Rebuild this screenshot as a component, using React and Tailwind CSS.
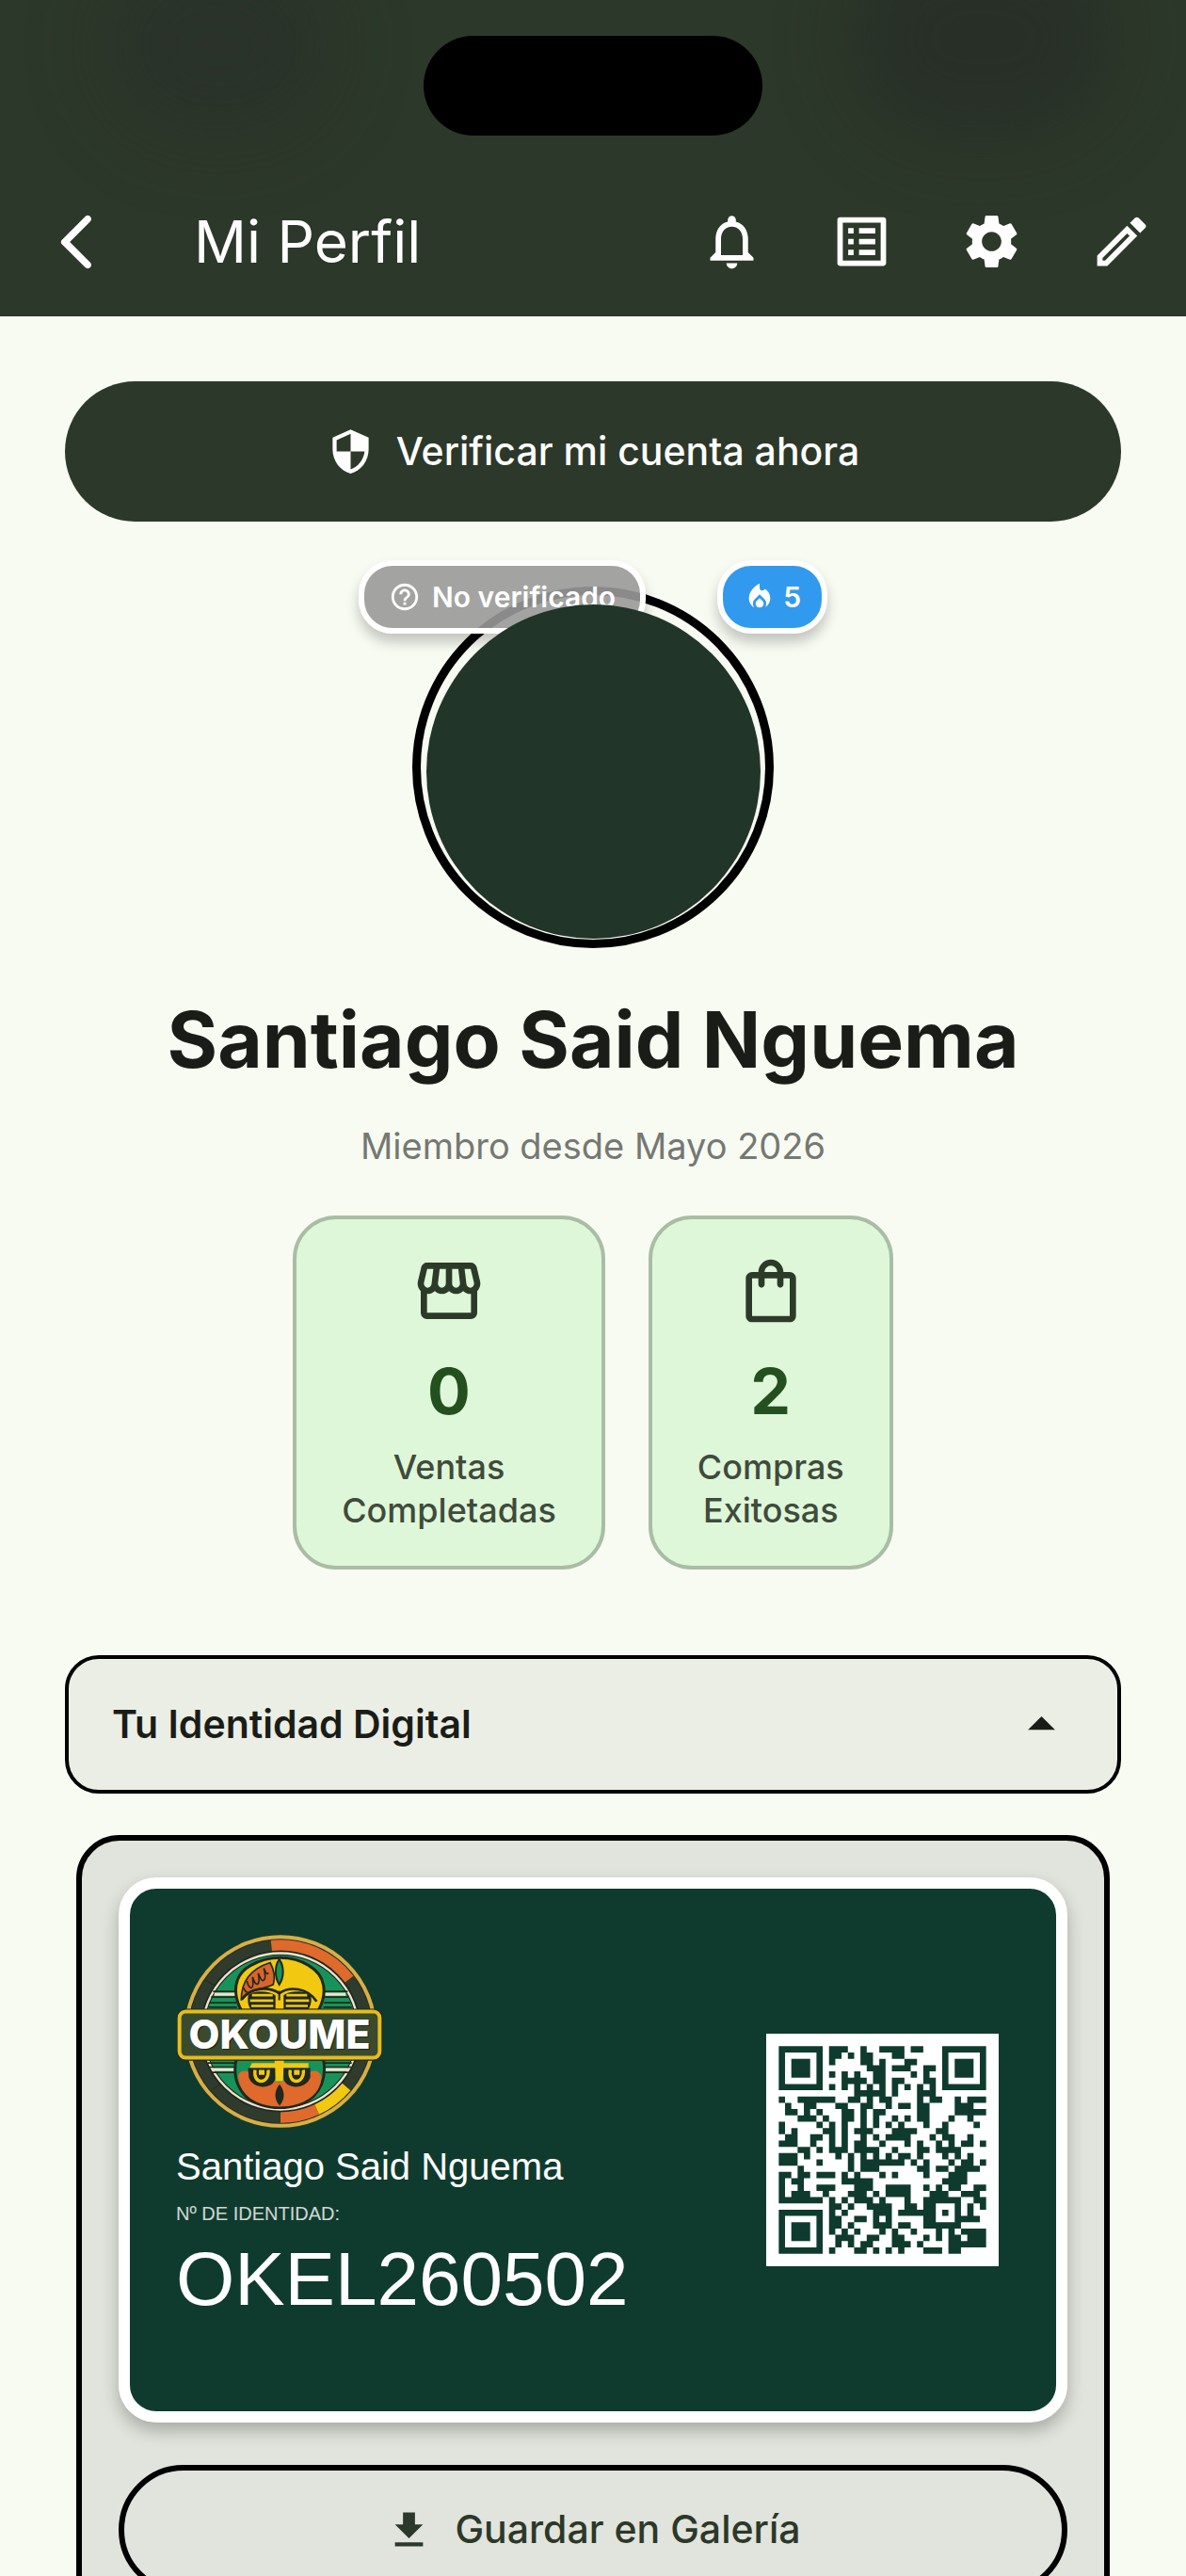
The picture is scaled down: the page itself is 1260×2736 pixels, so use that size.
import React, { useState } from 'react';
import {
  MdNotificationsNone,
  MdListAlt,
  MdSettings,
  MdOutlineEdit,
  MdSecurity,
  MdHelpOutline,
  MdOutlineStorefront,
  MdOutlineShoppingBag,
  MdArrowDropUp,
  MdArrowDropDown,
} from 'react-icons/md';

const USER = {
  name: 'Santiago Said Nguema',
  since: 'Miembro desde Mayo 2026',
  identity: 'OKEL260502',
  streak: 5,
};

const ACTIONS = [
  { label: 'Notificaciones', Icon: MdNotificationsNone },
  { label: 'Pedidos', Icon: MdListAlt },
  { label: 'Ajustes', Icon: MdSettings },
  { label: 'Editar perfil', Icon: MdOutlineEdit },
];

const STATS = [
  { value: 0, lines: ['Ventas', 'Completadas'], Icon: MdOutlineStorefront },
  { value: 2, lines: ['Compras', 'Exitosas'], Icon: MdOutlineShoppingBag },
];

// Dark modules of each QR row, without the three finder squares
const QR_ROWS = [
  '8-10 13 16-19 21-22',
  '8-9 11 13-14 18-19',
  '8 13-14 16 20-21',
  '14-16 18-20 23-24',
  '8 10 12 15-16 21 23',
  '10-13 15-16 18-19 23-24',
  '8 10 12 14 16 18 20 22 24',
  '12-16 18 22-24',
  '0 3-8 11-12 14 16-17 22 24-25 28 30-32',
  '1 4-5 9-10 13-14 17 19-20 22-23 28-30',
  '1-2 4 6 10-11 13 15-16 22-23 28-32',
  '3-5 7 10-11 13 15 18 20 22-23 27 30',
  '0 6 8 10 13 15 17 19 23 26 31',
  '0 2 7-8 10 12-14 18-21 25-26',
  '1-2 5-6 8 10 13 15 17-20 24 26-27 30',
  '0-2 5 8 10 12-13 16 20 22 25 27 29-30 32',
  '3-4 6 8-10 12-15 18 22-23 25-28',
  '0-2 4 9 11 13 15 17 19-20 22 26 28 30',
  '0-2 6 11 13-19 21 23 27 29-30 32',
  '3 11 13-15 22-23 25-26 28-31',
  '0-1 3-4 6-8 10 12 16 18 23 27-29',
  '0 2-3 10-14 26-29',
  '0 3 6-8 12-14 17-20 23 25 27-28 31-32',
  '0 2-4 7 11-13 15 17-20 24-26 29-31',
  '0-6 8 10 12-14 16 20 23-28 31-32',
  '8-9 11 14-17 20-21 23-24 28 30 32',
  '8 10 15-17 19-24 26 28 30',
  '8-9 12-13 15 17 23-24 28-31',
  '8-9 11 15-17 19-20 23-28',
  '8 10 12 16 18 21 25 27 29-32',
  '9-11 14-15 18-19 23 25 27-28 30-32',
  '9 11 13-14 18-20 22 27-32',
  '8 12-13 15 17 19 23-25 27-28',
];

const QR_PATH = QR_ROWS.map((row, y) =>
  row
    .split(' ')
    .map((run) => {
      const [from, to = from] = run.split('-').map(Number);
      return `M${from} ${y}h${to - from + 1}v1h-${to - from + 1}z`;
    })
    .join('')
).join('');

const FINDERS = [
  [0, 0],
  [26, 0],
  [0, 26],
];

const QrCode = ({ className }) => (
  <svg viewBox="0 0 37 37" className={className} role="img" aria-label="Código QR">
    <rect width="37" height="37" fill="#fff" />
    <g transform="translate(2 2)" fill="#0f3b2e">
      <path d={QR_PATH} />
      {FINDERS.map(([x, y]) => (
        <g key={`${x}-${y}`}>
          <path fillRule="evenodd" d={`M${x} ${y}h7v7h-7zM${x + 1} ${y + 1}v5h5v-5z`} />
          <rect x={x + 2} y={y + 2} width="3" height="3" />
        </g>
      ))}
    </g>
  </svg>
);

const BackIcon = ({ className }) => (
  <svg viewBox="0 0 24 24" fill="currentColor" className={className} aria-hidden="true">
    <path d="M16.62 2.99c-.49-.49-1.28-.49-1.77 0L6.54 11.3c-.39.39-.39 1.02 0 1.41l8.31 8.31c.49.49 1.28.49 1.77 0s.49-1.28 0-1.77L9.38 12l7.25-7.25c.48-.48.48-1.28-.01-1.76z" />
  </svg>
);

const FlameIcon = ({ className }) => (
  <svg viewBox="0 0 24 24" fill="currentColor" className={className} aria-hidden="true">
    <path d="m12 12.9-2.13 2.09c-.56.56-.87 1.29-.87 2.07C9 18.68 10.35 20 12 20s3-1.32 3-2.94c0-.78-.31-1.52-.87-2.07L12 12.9z" />
    <path d="m16 6-.44.55C14.38 8.02 12 7.19 12 5.3V2S4 6 4 13c0 2.92 1.56 5.47 3.89 6.86-.56-.79-.89-1.76-.89-2.8 0-1.32.52-2.56 1.47-3.5L12 10.1l3.53 3.47c.95.93 1.47 2.17 1.47 3.5 0 1.02-.31 1.96-.85 2.75 1.89-1.15 3.29-3.06 3.71-5.3.66-3.55-1.07-6.9-3.86-8.52z" />
  </svg>
);

const DownloadIcon = ({ className }) => (
  <svg viewBox="0 0 24 24" fill="currentColor" className={className} aria-hidden="true">
    <path d="M19 9h-4V3H9v6H5l7 7 7-7zM5 18v2h14v-2H5z" />
  </svg>
);

const Logo = ({ className }) => (
  <svg viewBox="54 75 660 620" className={className} role="img" aria-label="OKOUME">
    <circle cx="387" cy="385" r="301" fill="#262f24" stroke="#d9ae45" strokeWidth="12" />
    <circle cx="387" cy="385" r="275" fill="none" stroke="#2f3b2c" strokeWidth="34" />
    <g fill="none" strokeWidth="34">
      <path d="M358 111.500A275 275 0 0 1 606 219" stroke="#e0692c" />
      <path d="M387 660A275 275 0 0 0 503 634" stroke="#e0692c" />
      <path d="M503 634A275 275 0 0 0 597 562" stroke="#f2c811" />
    </g>
    <path d="M148 222l30 18M172 570l26-20" stroke="#20281f" strokeWidth="3" />
    <circle cx="387" cy="385" r="249" fill="#17935a" stroke="#1d241c" strokeWidth="14" />
    <circle cx="387" cy="385" r="249" fill="none" stroke="#ece3cd" strokeWidth="7" />

    {/* side stripes */}
    <g stroke="#1f2a1e" strokeWidth="5">
      <path d="M172 258h75M526 258h75M166 276h82M526 276h80M162 294h84M526 294h84M158 308h90M524 308h90" />
      <path d="M156 486h90M526 486h88M160 499h86M526 499h86M166 516h80M526 516h80" />
    </g>
    <path d="M176 267h68M529 267h66M170 507h72M530 507h72" stroke="#ece3cd" strokeWidth="10" />

    {/* upper half of the mask */}
    <path d="M262 318C232 262 240 204 290 176C350 142 424 142 478 176C530 206 538 262 508 318Z" fill="#f2c811" stroke="#20281f" strokeWidth="9" />
    <path d="M262 284C262 222 298 184 354 166C366 188 370 216 364 236C330 254 294 244 264 284Z" fill="#d9652b" stroke="#20281f" strokeWidth="5" />
    <path d="M280 224q6 24 14 22t4-34q8 26 16 22t2-34q10 28 18 22t0-38q10 26 14 14M270 246q4 14 12 14" fill="none" stroke="#20281f" strokeWidth="5" />
    <path d="M383 156C368 178 368 212 383 236C399 212 399 178 383 156Z" fill="#17935a" stroke="#20281f" strokeWidth="6" />
    <path d="M264 282C292 246 350 240 383 264C416 240 474 246 502 290" fill="none" stroke="#20281f" strokeWidth="8" />
    <path d="M284 270C300 254 350 254 371 270V318H294C282 300 282 286 284 270ZM397 270C416 254 466 254 484 270C486 286 486 300 474 318H397Z" fill="#20281f" />
    <path d="M296 270h66M290 287h74M294 304h70M406 270h66M404 287h74M404 304h70" stroke="#f2c811" strokeWidth="8" />
    <path d="M383 256v30" stroke="#20281f" strokeWidth="6" />

    {/* lower half of the mask */}
    <path d="M246 474C236 520 246 560 276 592C334 640 434 640 492 592C524 560 532 520 524 474Z" fill="#17935a" stroke="#20281f" strokeWidth="9" />
    <path d="M252 526C262 502 284 510 300 524L383 548L470 524C486 506 508 506 517 526C518 560 500 584 480 598C430 634 340 634 290 598C266 578 254 556 252 526Z" fill="#e0692c" />
    <path d="M296 486h180v16H288Z" fill="#f2c811" />
    <path d="M368 474h30l-3 70h-24Z" fill="#f2c811" />
    <path d="M284 502H370V536C364 570 300 572 286 532ZM397 502H482V532C468 572 404 570 397 536Z" fill="#20281f" />
    <path d="M306 508c-8 48 46 48 42 0M418 508c-8 48 46 48 42 0" fill="none" stroke="#f2c811" strokeWidth="10" />
    <path d="M318 508h18v16h-18zM430 508h18v16h-18z" fill="#f2c811" />
    <path d="M384 554C366 576 366 602 384 622C402 602 402 576 384 554Z" fill="#20281f" />

    {/* name plate */}
    <rect x="57" y="313" width="655" height="166" rx="26" fill="#20281f" />
    <rect x="65" y="322" width="638" height="147" rx="20" fill="#3a4a2c" stroke="#e3bd1d" strokeWidth="12" />
    <text x="388" y="444" textAnchor="middle" fontSize="128" fill="#161c14" opacity="0.7" className="font-['Inter',sans-serif] font-extrabold">OKOUME</text>
    <text x="384" y="440" textAnchor="middle" fontSize="128" fill="#fff" className="font-['Inter',sans-serif] font-extrabold">OKOUME</text>
  </svg>
);

const StatCard = ({ value, lines, Icon }) => (
  <div className="flex flex-col items-center px-12 py-9 rounded-[46px] border-4 border-[#a9bda4] bg-[#dff7d9]">
    <Icon className="size-20 text-[#2c3a29]" />
    <p className="mt-6 text-[68px] leading-[84px] font-bold text-[#245020]">{value}</p>
    <p className="mt-4 text-[36px] leading-[46px] font-medium text-center text-[#3f4b3c]">
      {lines[0]}
      <br />
      {lines[1]}
    </p>
  </div>
);

const App = () => {
  const [open, setOpen] = useState(true);

  return (
    <div className="min-h-screen overflow-hidden bg-[#f8fbf2] font-['Inter',sans-serif]">
      {/* Header */}
      <header className="relative overflow-hidden bg-[#2c3829] text-white">
        <div className="absolute left-28 -top-12 w-60 h-48 rounded-full bg-[#292b2b]/40 blur-2xl" />
        <div className="absolute right-20 -top-16 w-68 h-52 rounded-full bg-[#242826]/55 blur-2xl" />
        <div className="relative flex justify-center pt-[38px]">
          <div className="w-[360px] h-[106px] rounded-full bg-black" />
        </div>
        <div className="relative flex items-center pt-11 pb-[11px] pl-[46px] pr-[34px]">
          <button type="button" aria-label="Volver" className="flex">
            <BackIcon className="size-[72px]" />
          </button>
          <h1 className="flex-1 ml-[88px] text-[62px] leading-[80px]">Mi Perfil</h1>
          <div className="flex items-center gap-[69px] py-[34px]">
            {ACTIONS.map(({ label, Icon }) => (
              <button key={label} type="button" aria-label={label} className="flex">
                <Icon className="size-[69px]" />
              </button>
            ))}
          </div>
        </div>
      </header>

      <main className="flex flex-col px-[69px] pt-[69px]">
        <button type="button" className="flex items-center justify-center gap-[23px] h-[149px] rounded-full bg-[#2c3829] text-white">
          <MdSecurity className="size-[51px]" />
          <span className="text-[41px] font-medium">Verificar mi cuenta ahora</span>
        </button>

        {/* Avatar */}
        <section className="flex flex-col items-center">
          <div className="relative mt-[69px]">
            <div className="flex items-end justify-center size-96 rounded-full border-[9px] border-black pb-px">
              <div className="relative z-20 size-[355px] rounded-full bg-[#213529]" />
            </div>
            <div className="absolute z-10 -left-[57px] -top-7 flex items-center gap-3 h-[78px] px-[26px] rounded-[36px] border-6 border-white bg-[#999999]/90 text-white whitespace-nowrap shadow-[0_9px_14px_rgba(0,0,0,0.22)]">
              <MdHelpOutline className="size-[34px]" />
              <span className="text-[30px] font-semibold">No verificado</span>
            </div>
            <div className="absolute z-10 -right-[57px] -top-7 flex items-center gap-2 h-[78px] px-[22px] rounded-[36px] border-6 border-white bg-[#319aee] text-white shadow-[0_9px_14px_rgba(0,0,0,0.22)]">
              <FlameIcon className="size-[34px]" />
              <span className="text-[30px] font-semibold">{USER.streak}</span>
            </div>
          </div>

          <h2 className="mt-12 text-[82px] leading-[100px] font-bold text-[#1a1d17]">{USER.name}</h2>
          <p className="mt-9 text-[38px] leading-[52px] text-[#757873]">{USER.since}</p>

          <div className="mt-12 flex gap-[46px]">
            {STATS.map((stat) => (
              <StatCard key={stat.lines[0]} {...stat} />
            ))}
          </div>
        </section>

        {/* Digital identity */}
        <button
          type="button"
          aria-expanded={open}
          onClick={() => setOpen(!open)}
          className="mt-[91px] flex items-center justify-between h-[147px] px-[46px] rounded-[36px] border-4 border-black bg-[#ebeee5] text-[#1a1d17]"
        >
          <span className="text-[41px] font-semibold">Tu Identidad Digital</span>
          {open ? <MdArrowDropUp className="size-[69px]" /> : <MdArrowDropDown className="size-[69px]" />}
        </button>

        {open && (
          <section className="mt-11 mx-3 p-[39px] rounded-[46px] border-6 border-black bg-[#e1e4dc]">
            <div className="flex items-center justify-between pl-[49px] pr-[61px] rounded-[40px] border-12 border-white bg-[#0f3b2e] text-white shadow-[0_9px_18px_rgba(0,0,0,0.25)]">
              <div className="pt-12 pb-[100px] font-['Liberation_Sans',Arial,sans-serif]">
                <Logo className="w-[220px] h-[207px]" />
                <p className="mt-4 text-[40px] leading-[48px]">{USER.name}</p>
                <p className="mt-3 text-[20px] leading-[28px] text-white/80">Nº DE IDENTIDAD:</p>
                <p className="mt-4 text-[80px] leading-[80px]">{USER.identity}</p>
              </div>
              <QrCode className="size-[247px]" />
            </div>

            <button
              type="button"
              className="mt-[45px] w-full flex items-center justify-center gap-[23px] h-[138px] rounded-full border-6 border-black text-[#2c3829]"
            >
              <DownloadIcon className="size-[51px]" />
              <span className="text-[41px] font-medium">Guardar en Galería</span>
            </button>
          </section>
        )}
      </main>
    </div>
  );
};

export default App;
